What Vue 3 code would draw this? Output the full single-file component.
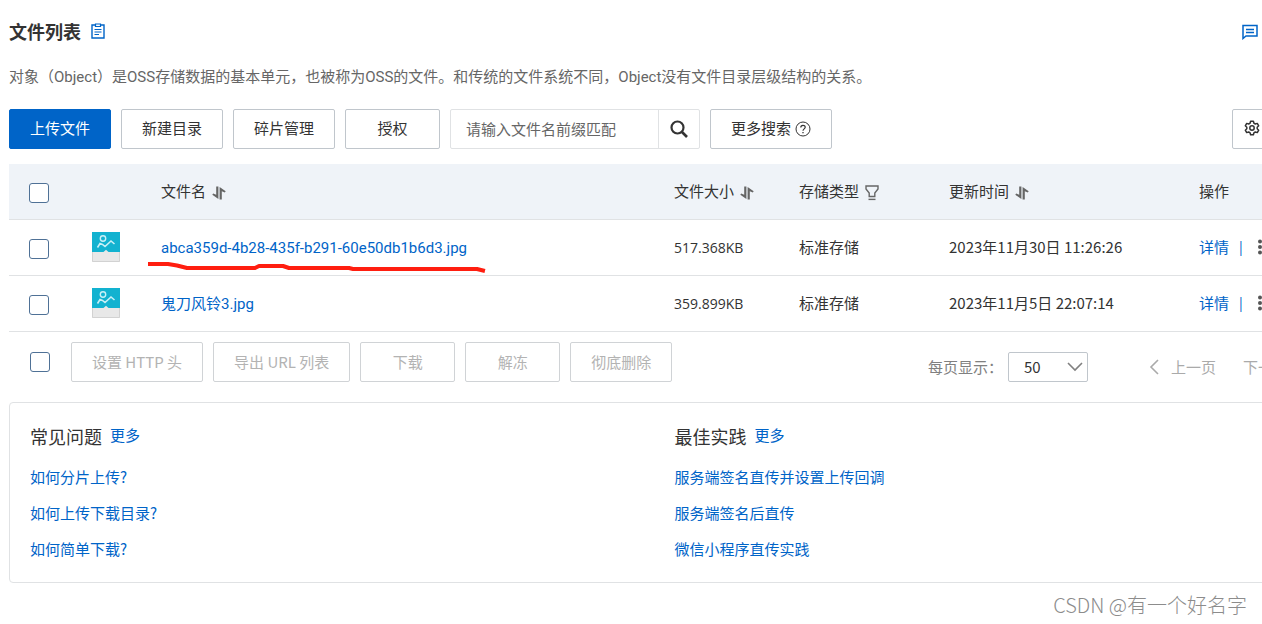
<script setup>
import { ref } from 'vue'

const columns = [
  { key: 'size', label: '文件大小', icon: 'sort' },
  { key: 'type', label: '存储类型', icon: 'filter' },
  { key: 'time', label: '更新时间', icon: 'sort' }
]

const files = ref([
  {
    name: 'abca359d-4b28-435f-b291-60e50db1b6d3.jpg',
    size: '517.368KB',
    type: '标准存储',
    time: '2023年11月30日 11:26:26',
    marked: true,
    checked: false
  },
  {
    name: '鬼刀风铃3.jpg',
    size: '359.899KB',
    type: '标准存储',
    time: '2023年11月5日 22:07:14',
    marked: false,
    checked: false
  }
])

const batchActions = ['设置 HTTP 头', '导出 URL 列表', '下载', '解冻', '彻底删除']

const helpGroups = [
  { title: '常见问题', links: ['如何分片上传?', '如何上传下载目录?', '如何简单下载?'] },
  { title: '最佳实践', links: ['服务端签名直传并设置上传回调', '服务端签名后直传', '微信小程序直传实践'] }
]

const keyword = ref('')
const pageSize = ref('50')
</script>

<template>
  <div class="viewport">
    <main class="page">
      <header class="head">
        <h1>文件列表</h1>
        <a href="#" class="head-icon" aria-label="文档">
          <svg width="14" height="16" viewBox="0 0 14 16" fill="none" stroke="#0064c8">
            <path d="M4 2H1V15H13V2H10" stroke-width="1.4" />
            <path d="M4.5 1H9.5V3.5H4.5Z" stroke-width="1.2" />
            <path d="M3.5 6.5H10.5M3.5 9H10.5M3.5 11.5H8" stroke-width="1.2" />
          </svg>
        </a>
        <a href="#" class="chat" aria-label="反馈">
          <svg width="16" height="18" viewBox="0 0 16 18" fill="none" stroke="#0064c8">
            <path d="M1 16.5V3.5H15V14H4Z" stroke-width="1.5" />
            <path d="M4 7.5H12M4 10.5H12" stroke-width="1.5" />
          </svg>
        </a>
      </header>

      <p class="desc">对象（Object）是OSS存储数据的基本单元，也被称为OSS的文件。和传统的文件系统不同，Object没有文件目录层级结构的关系。</p>

      <div class="toolbar">
        <button type="button" class="btn primary">上传文件</button>
        <button type="button" class="btn">新建目录</button>
        <button type="button" class="btn">碎片管理</button>
        <button type="button" class="btn">授权</button>
        <div class="search">
          <input v-model="keyword" type="text" placeholder="请输入文件名前缀匹配" aria-label="文件名前缀" />
          <button type="button" aria-label="搜索">
            <svg width="20" height="20" viewBox="0 0 20 20" fill="none" stroke="#333">
              <circle cx="8.5" cy="8.5" r="6" stroke-width="2.2" />
              <path d="M13 13L18 18" stroke-width="2.6" />
            </svg>
          </button>
        </div>
        <button type="button" class="btn more">
          更多搜索
          <svg width="16" height="18" viewBox="0 0 16 18" fill="none" stroke="#333">
            <circle cx="8" cy="10" r="7" />
            <path d="M5.8 8.4C5.8 5.6 10.2 5.6 10.2 8.3C10.2 9.9 8 9.9 8 11.8" stroke-width="1.2" />
            <path d="M8 12.9V14.2" stroke-width="1.3" />
          </svg>
        </button>
        <button type="button" class="btn gear" aria-label="设置">
          <svg width="16" height="16" viewBox="0 0 16 16" fill="none" stroke="#333" stroke-width="1.5" stroke-linejoin="round">
            <path d="M6.6 1.2H9.4L9.9 3.2L11.3 4L13.3 3.4L14.7 5.8L13.2 7.2V8.8L14.7 10.2L13.3 12.6L11.3 12L9.9 12.8L9.4 14.8H6.6L6.1 12.8L4.7 12L2.7 12.6L1.3 10.2L2.8 8.8V7.2L1.3 5.8L2.7 3.4L4.7 4L6.1 3.2Z" />
            <circle cx="8" cy="8" r="2.2" />
          </svg>
        </button>
      </div>

      <table>
        <colgroup>
          <col class="c-check" />
          <col class="c-thumb" />
          <col />
          <col class="c-size" />
          <col class="c-type" />
          <col class="c-time" />
          <col class="c-op" />
        </colgroup>
        <thead>
          <tr>
            <th class="pick"><input type="checkbox" aria-label="全选" /></th>
            <th></th>
            <th>
              <span class="label">文件名
                <svg width="14" height="18" viewBox="0 0 14 18" fill="#666">
                  <path d="M4.2 4.5H6.4V17L0.3 12.8L1.2 11.4L4.2 12.8Z" />
                  <path d="M7.6 17.5H9.8V9.2L12.8 10.6L13.7 9.2L7.6 5Z" />
                </svg>
              </span>
            </th>
            <th v-for="c in columns" :key="c.key">
              <span class="label">{{ c.label }}
                <svg v-if="c.icon === 'sort'" width="14" height="18" viewBox="0 0 14 18" fill="#666">
                  <path d="M4.2 4.5H6.4V17L0.3 12.8L1.2 11.4L4.2 12.8Z" />
                  <path d="M7.6 17.5H9.8V9.2L12.8 10.6L13.7 9.2L7.6 5Z" />
                </svg>
                <svg v-else width="14" height="20" viewBox="0 0 14 20" fill="none" stroke="#666" stroke-width="1.4">
                  <path d="M1 5H13V8L9.8 12V15.5H4.2V12L1 8Z" />
                  <path d="M3.5 18.4H10.5" />
                </svg>
              </span>
            </th>
            <th>操作</th>
          </tr>
        </thead>
        <tbody>
          <tr v-for="f in files" :key="f.name">
            <td class="pick"><input v-model="f.checked" type="checkbox" :aria-label="f.name" /></td>
            <td>
              <svg width="28" height="30" viewBox="0 0 28 30" fill="none">
                <path d="M0 0H28V30H0Z" fill="#e8e8e8" />
                <path d="M0 0H28V20H0Z" fill="#12b2d0" />
                <path d="M11.5 20L14 17.8L16.5 20Z" fill="#e8e8e8" />
                <path d="M0.5 20V29.5H27.5V20" stroke="#d2d2d2" />
                <circle cx="11" cy="6.5" r="2.7" stroke="#c9f0f6" stroke-width="1.4" />
                <path d="M5.5 15.5L8 11.5L10.5 12.5L13 14.5L19 9L22.5 12" stroke="#c9f0f6" stroke-width="1.6" />
              </svg>
            </td>
            <td class="file">
              <div class="name">
                <a href="#">{{ f.name }}</a>
                <svg v-if="f.marked" class="mark" width="340" height="14" viewBox="0 0 340 14" fill="none" stroke="#ff1e10" stroke-width="4" stroke-linejoin="round" stroke-linecap="square">
                  <path d="M3 4H21L30 5.5L40 8H108L112 6H136L142 8H202L206 9H330L336 10.5" />
                </svg>
              </div>
            </td>
            <td class="latin">{{ f.size }}</td>
            <td>{{ f.type }}</td>
            <td>{{ f.time }}</td>
            <td>
              <div class="ops">
                <a href="#">详情</a>
                <span class="bar">|</span>
                <button type="button" aria-label="更多操作">
                  <svg width="4" height="16" viewBox="0 0 4 16" fill="#555">
                    <circle cx="2" cy="2.5" r="2" />
                    <circle cx="2" cy="8" r="2" />
                    <circle cx="2" cy="13.5" r="2" />
                  </svg>
                </button>
              </div>
            </td>
          </tr>
        </tbody>
      </table>

      <div class="foot">
        <input type="checkbox" aria-label="全选文件" />
        <div class="batch">
          <button v-for="a in batchActions" :key="a" type="button" class="btn" disabled>{{ a }}</button>
        </div>
        <div class="pager">
          <label for="page-size">每页显示：</label>
          <div class="select">
            <select id="page-size" v-model="pageSize">
              <option>50</option>
              <option>100</option>
            </select>
            <svg width="16" height="10" viewBox="0 0 16 10" fill="none" stroke="#808080" stroke-width="1.6">
              <path d="M1 1L8 8L15 1" />
            </svg>
          </div>
          <button type="button" class="prev" disabled>
            <svg width="10" height="16" viewBox="0 0 10 16" fill="none" stroke="#aaa" stroke-width="1.6">
              <path d="M9 1L2 8L9 15" />
            </svg>
            上一页
          </button>
          <button type="button" class="next" disabled>下一页</button>
        </div>
      </div>

      <section class="help">
        <div v-for="g in helpGroups" :key="g.title">
          <div class="help-head">
            <h2>{{ g.title }}</h2>
            <a href="#">更多</a>
          </div>
          <ul>
            <li v-for="l in g.links" :key="l"><a href="#">{{ l }}</a></li>
          </ul>
        </div>
      </section>
    </main>
    <div class="watermark">CSDN @有一个好名字</div>
  </div>
</template>

<style>
body {
  margin: 0;
  background: #fff;
}
</style>

<style scoped>
.viewport {
  position: relative;
  min-height: 100vh;
  overflow: hidden;
  font-family: "Noto Sans CJK SC", "Open Sans", sans-serif;
  font-size: 15px;
  line-height: 20px;
  color: #333;
}
.viewport * {
  box-sizing: border-box;
}
/* The console is wider than the window; its right edge is clipped. */
.page {
  margin: 0 -58px 0 9px;
  padding-top: 19px;
}
button,
input,
select {
  font: inherit;
  color: inherit;
}
button {
  background: none;
  border: 0;
  padding: 0;
}
svg {
  display: block;
  flex: none;
}
a {
  color: #0064c8;
  text-decoration: none;
}
.latin {
  font-family: "Open Sans", "Noto Sans", sans-serif;
  font-size: 14px;
}
.head {
  display: flex;
  align-items: center;
  height: 24px;
  padding-right: 62px;
}
h1 {
  margin: 0;
  font-size: 18px;
  line-height: 24px;
  font-weight: 700;
}
.head-icon {
  margin-left: 10px;
}
.chat {
  margin-left: auto;
}
.desc {
  margin: 24px 0 0;
  color: #666;
  font-family: Roboto, "Noto Sans CJK SC", sans-serif;
  white-space: nowrap;
}
.toolbar {
  display: flex;
  gap: 10px;
  margin-top: 22px;
  padding-right: 48px;
}
.btn {
  height: 40px;
  min-width: 95px;
  padding: 0 20px;
  border: 1px solid #c0c6cc;
  border-radius: 2px;
  white-space: nowrap;
}
.toolbar .btn {
  padding-bottom: 2px;
}
.btn.primary {
  background: #0064c8;
  border-color: #0064c8;
  color: #fff;
}
.btn:disabled {
  color: #b3b3b3;
  border-color: #d0d3d6;
}
.btn.more {
  display: flex;
  align-items: center;
  gap: 4px;
}
.toolbar .gear {
  min-width: 40px;
  width: 40px;
  padding: 0 11px 2px;
  margin-left: auto;
}
.search {
  display: flex;
  width: 250px;
  height: 40px;
  border: 1px solid #e0e2e4;
  border-radius: 2px;
}
.search input {
  flex: 1;
  min-width: 0;
  padding: 0 15px;
  border: 0;
  background: none;
  outline: 0;
}
.search input::placeholder {
  color: #666;
  opacity: 1;
}
.search button {
  width: 41px;
  padding-left: 10px;
  border-left: 1px solid #e0e2e4;
}
table {
  width: 100%;
  margin-top: 15px;
  table-layout: fixed;
  border-collapse: separate;
  border-spacing: 0;
}
.c-check {
  width: 63px;
}
.c-thumb {
  width: 69px;
}
.c-size {
  width: 125px;
}
.c-type {
  width: 150px;
}
.c-time {
  width: 250px;
}
.c-op {
  width: 141px;
}
th,
td {
  height: 56px;
  padding: 0 0 2px 20px;
  border-bottom: 1px solid #e0e2e4;
  text-align: left;
  font-weight: 400;
  vertical-align: middle;
  white-space: nowrap;
}
th {
  background: #eff3f8;
}
.pick {
  padding: 2px 0 0 20px;
}
.file,
.latin {
  padding-bottom: 0;
}
.file {
  font-family: Roboto, "Noto Sans CJK SC", sans-serif;
}
input[type="checkbox"] {
  appearance: none;
  display: block;
  width: 20px;
  height: 20px;
  margin: 0;
  border: 1px solid #4f7196;
  border-radius: 3px;
  background: #fff;
}
input[type="checkbox"]:checked {
  background: #0064c8;
}
.label {
  display: flex;
  align-items: center;
  gap: 6px;
}
.name {
  position: relative;
}
.mark {
  position: absolute;
  left: -14px;
  top: 22px;
}
.ops {
  display: flex;
  align-items: center;
}
.bar {
  width: 4px;
  margin: 0 17px 0 8px;
  font-family: "Open Sans", sans-serif;
  font-size: 14px;
  color: #0064c8;
}
.foot {
  display: flex;
  align-items: flex-start;
  padding: 10px 0 0 21px;
}
.foot > input {
  margin-top: 10px;
}
.batch {
  display: flex;
  gap: 10px;
  margin-left: 21px;
}
.pager {
  display: flex;
  align-items: center;
  margin: 10px 32px 0 auto;
  color: #808080;
  white-space: nowrap;
}
.select {
  display: grid;
  align-items: center;
  width: 80px;
  margin-left: 5px;
}
.select select,
.select svg {
  grid-area: 1 / 1;
}
.select select {
  appearance: none;
  width: 100%;
  height: 30px;
  padding: 0 15px;
  border: 1px solid #c0c6cc;
  border-radius: 2px;
  background: none;
  color: #333;
}
.select svg {
  justify-self: end;
  margin-right: 5px;
  pointer-events: none;
}
.prev,
.next {
  display: flex;
  align-items: center;
  color: #aaa;
}
.prev {
  gap: 12px;
  margin-left: 61px;
}
.next {
  margin-left: 27px;
}
.help {
  display: grid;
  grid-template-columns: 1fr 1fr;
  margin-top: 20px;
  padding: 19px 0 15px 20px;
  border: 1px solid #e0e2e4;
  border-radius: 4px;
}
.help-head {
  display: flex;
  align-items: center;
  gap: 8px;
}
.help-head a {
  padding-bottom: 2px;
}
h2 {
  margin: 0;
  font-size: 18px;
  line-height: 28px;
  font-weight: 400;
}
ul {
  margin: 9px 0 0;
  padding: 0;
  list-style: none;
}
li {
  line-height: 36px;
}
.watermark {
  position: absolute;
  right: 15px;
  bottom: 6px;
  font-size: 20px;
  line-height: 26px;
  font-weight: 300;
  color: #8c8c8c;
}
</style>
